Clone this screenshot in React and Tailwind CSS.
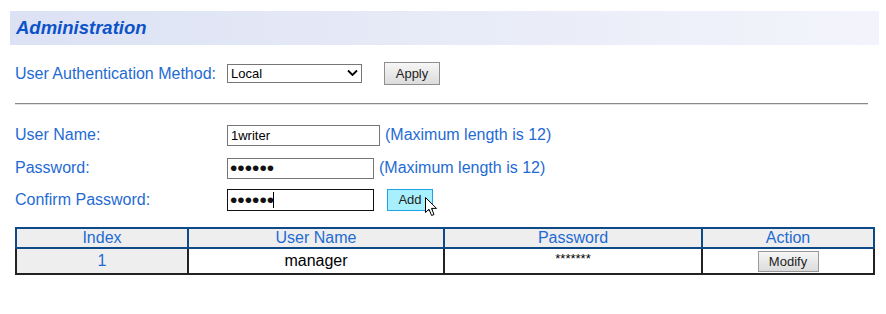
import { useState } from "react";

// Small arrow pointer hovering over the Add button
function PointerCursor() {
  return (
    <svg
      className="absolute left-[425px] top-[197px]"
      width="13"
      height="20"
      viewBox="0 0 13 20"
    >
      <path
        d="M0.5 0.5 L0.5 15.5 L4 12.2 L6.6 18.5 L9 17.5 L6.5 11.4 L11.5 11.4 Z"
        fill="#fff"
        stroke="#000"
        strokeWidth="1"
        strokeLinejoin="round"
      />
    </svg>
  );
}

function FormRow({ label, children, className = "" }) {
  return (
    <div className={`flex items-center h-[22px] ${className}`}>
      <div className="w-[212px] text-[16px] text-[#1f6bd3]">{label}</div>
      {children}
    </div>
  );
}

const users = [{ index: 1, name: "manager", password: "*******" }];

export default function App() {
  const [userName, setUserName] = useState("1writer");
  const [password, setPassword] = useState("123456");
  const [confirm, setConfirm] = useState("123456");
  const [method, setMethod] = useState("Local");

  return (
    <div className="relative w-[886px] h-[314px] bg-white font-['Liberation_Sans',Arial,sans-serif] overflow-hidden">
      <div className="pt-[11px] pl-[10px]">
        <div className="w-[869px] h-[34px] flex items-center pl-[6px] bg-gradient-to-r from-[#dce2f4] to-[#f3f4fb]">
          <h1 className="text-[18.5px] font-bold italic text-[#0c52c9]">Administration</h1>
        </div>
      </div>

      <div className="pl-[15px]">
        {/* authentication method */}
        <div className="flex items-center h-[23px] mt-[17px]">
          <div className="w-[212px] text-[16px] text-[#1f6bd3]">User Authentication Method:</div>
          <div className="relative flex w-[135px] h-[19px]">
            <select
              value={method}
              onChange={(e) => setMethod(e.target.value)}
              className="appearance-none block w-[135px] h-[19px] min-h-0 border border-[#767676] bg-white pl-[3px] py-0 text-[13px] leading-[17px] text-black outline-none"
            >
              <option>Local</option>
              <option>RADIUS</option>
              <option>TACACS+</option>
            </select>
            <svg
              className="absolute right-[4px] top-[5px] pointer-events-none"
              width="11"
              height="8"
              viewBox="0 0 11 8"
            >
              <path d="M1 1.5 L5.5 6 L10 1.5" fill="none" stroke="#000" strokeWidth="1.8" />
            </svg>
          </div>
          <button className="ml-[22px] w-[56px] h-[23px] border border-[#8e8e8e] bg-gradient-to-b from-[#f6f6f6] to-[#dcdcdc] text-[13px] text-[#222]">
            Apply
          </button>
        </div>

        <div className="mt-[18px] w-[853px] border-t border-[#8a8a8a] border-b border-b-[#e2e2e2]" />

        {/* add user */}
        <FormRow label="User Name:" className="mt-[19px]">
          <input
            value={userName}
            maxLength={12}
            onChange={(e) => setUserName(e.target.value)}
            className="w-[153px] h-[21px] border border-[#767676] bg-white px-[3px] text-[13px] text-black outline-none"
          />
          <span className="ml-[5px] text-[16px] text-[#1f6bd3]">(Maximum length is 12)</span>
        </FormRow>

        <FormRow label="Password:" className="mt-[11px]">
          <input
            type="password"
            value={password}
            maxLength={12}
            onChange={(e) => setPassword(e.target.value)}
            className="w-[147px] h-[21px] border border-[#767676] bg-white px-[2px] text-[21px] leading-[19px] text-[#111] outline-none"
          />
          <span className="ml-[5px] text-[16px] text-[#1f6bd3]">(Maximum length is 12)</span>
        </FormRow>

        <FormRow label="Confirm Password:" className="mt-[10px]">
          <div className="relative">
            <input
              type="password"
              value={confirm}
              maxLength={12}
              onChange={(e) => setConfirm(e.target.value)}
              className="block w-[147px] h-[22px] border-[1.5px] border-[#111] bg-white px-[2px] text-[21px] leading-[19px] text-[#111] outline-none"
            />
            {/* text caret */}
            <span className="absolute left-[46px] top-[3px] w-px h-[16px] bg-black" />
          </div>
          <button className="ml-[13px] w-[46px] h-[22px] border border-[#1ea3e6] bg-[#a9f0ff] text-[13px] text-[#222]">
            Add
          </button>
        </FormRow>

        {/* user table */}
        <table className="mt-[16px] w-[858px] border-collapse text-[16px] table-fixed">
          <colgroup>
            <col className="w-[172px]" />
            <col className="w-[256px]" />
            <col className="w-[258px]" />
            <col className="w-[172px]" />
          </colgroup>
          <thead>
            <tr className="h-[20px] bg-[#eeeeee] text-[#1f6bd3]">
              <th className="font-normal border-2 border-[#0d4a87] leading-[16px] p-0">Index</th>
              <th className="font-normal border-2 border-[#0d4a87] leading-[16px] p-0">User Name</th>
              <th className="font-normal border-2 border-[#0d4a87] leading-[16px] p-0">Password</th>
              <th className="font-normal border-2 border-[#0d4a87] leading-[16px] p-0">Action</th>
            </tr>
          </thead>
          <tbody>
            {users.map((u) => (
              <tr key={u.index} className="h-[24px]">
                <td className="text-center bg-[#eeeeee] text-[#1f6bd3] border-2 border-[#222] p-0">{u.index}</td>
                <td className="text-center text-black border-2 border-[#222] p-0">{u.name}</td>
                <td className="text-center align-top text-[13px] text-black border-2 border-[#222] p-0">{u.password}</td>
                <td className="text-center border-2 border-[#222] p-0 leading-none">
                  <button className="w-[61px] h-[21px] border border-[#999] bg-gradient-to-b from-[#f6f6f6] to-[#dcdcdc] text-[13px] text-[#222] align-middle">
                    Modify
                  </button>
                </td>
              </tr>
            ))}
          </tbody>
        </table>
      </div>

      <PointerCursor />
    </div>
  );
}
